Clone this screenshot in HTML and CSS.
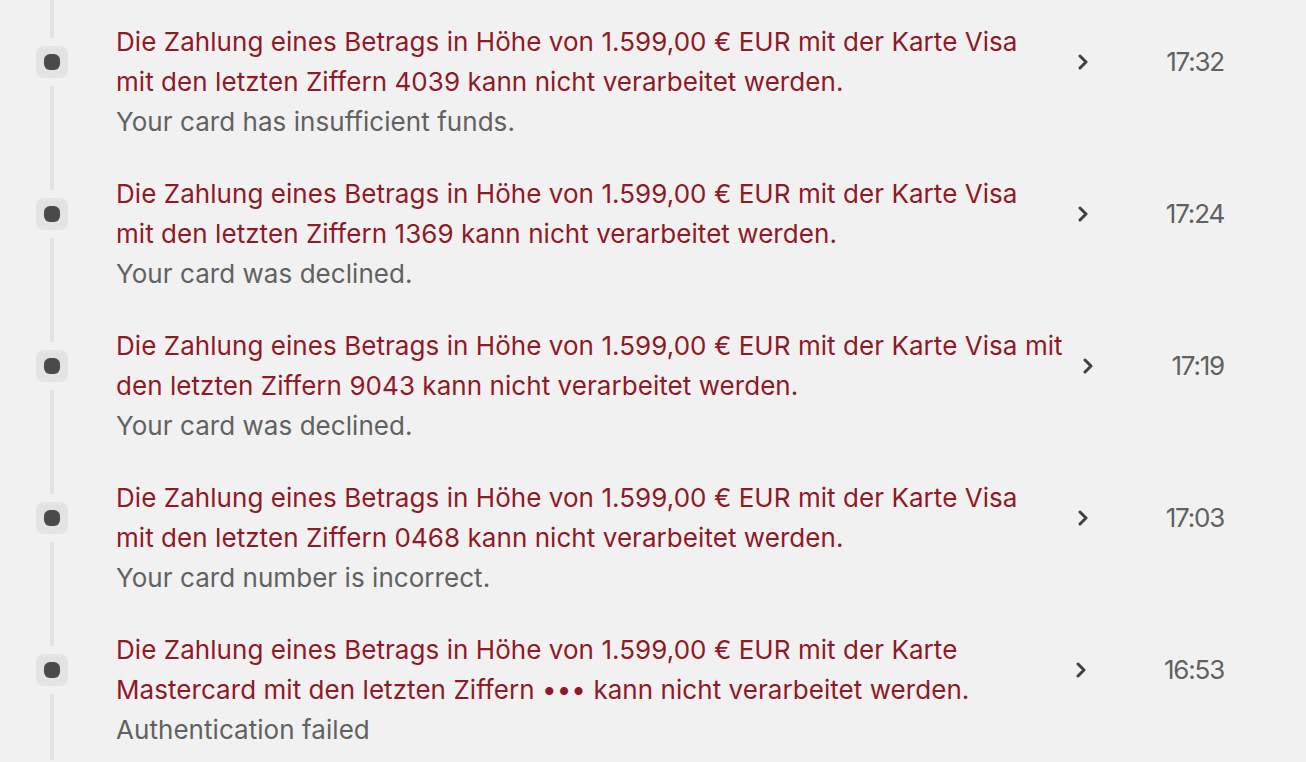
FILE: index.html
```html
<!DOCTYPE html>
<html lang="de">
<head>
<meta charset="utf-8">
<title>Timeline</title>
<link rel="stylesheet" href="styles.css">
</head>
<body>
<ul class="timeline">
  <li class="event">
    <div class="rail"><span class="seg seg-top"></span><span class="marker"><span class="marker-dot"></span></span><span class="seg seg-bottom"></span></div>
    <div class="event-body">
      <p class="title">Die Zahlung eines Betrags in Höhe von 1.599,00 € EUR mit der Karte Visa mit den letzten Ziffern 4039 kann nicht verarbeitet werden.</p>
      <svg class="chevron" viewBox="0 0 10 16" aria-hidden="true"><path d="M2 2l6 6-6 6" fill="none" stroke="currentColor" stroke-width="3" stroke-linecap="round" stroke-linejoin="round"/></svg>
      <span class="time">17:32</span>
      <p class="detail">Your card has insufficient funds.</p>
    </div>
  </li>
  <li class="event">
    <div class="rail"><span class="seg seg-top"></span><span class="marker"><span class="marker-dot"></span></span><span class="seg seg-bottom"></span></div>
    <div class="event-body">
      <p class="title">Die Zahlung eines Betrags in Höhe von 1.599,00 € EUR mit der Karte Visa mit den letzten Ziffern 1369 kann nicht verarbeitet werden.</p>
      <svg class="chevron" viewBox="0 0 10 16" aria-hidden="true"><path d="M2 2l6 6-6 6" fill="none" stroke="currentColor" stroke-width="3" stroke-linecap="round" stroke-linejoin="round"/></svg>
      <span class="time">17:24</span>
      <p class="detail">Your card was declined.</p>
    </div>
  </li>
  <li class="event">
    <div class="rail"><span class="seg seg-top"></span><span class="marker"><span class="marker-dot"></span></span><span class="seg seg-bottom"></span></div>
    <div class="event-body">
      <p class="title">Die Zahlung eines Betrags in Höhe von 1.599,00 € EUR mit der Karte Visa mit den letzten Ziffern 9043 kann nicht verarbeitet werden.</p>
      <svg class="chevron" viewBox="0 0 10 16" aria-hidden="true"><path d="M2 2l6 6-6 6" fill="none" stroke="currentColor" stroke-width="3" stroke-linecap="round" stroke-linejoin="round"/></svg>
      <span class="time">17:19</span>
      <p class="detail">Your card was declined.</p>
    </div>
  </li>
  <li class="event">
    <div class="rail"><span class="seg seg-top"></span><span class="marker"><span class="marker-dot"></span></span><span class="seg seg-bottom"></span></div>
    <div class="event-body">
      <p class="title">Die Zahlung eines Betrags in Höhe von 1.599,00 € EUR mit der Karte Visa mit den letzten Ziffern 0468 kann nicht verarbeitet werden.</p>
      <svg class="chevron" viewBox="0 0 10 16" aria-hidden="true"><path d="M2 2l6 6-6 6" fill="none" stroke="currentColor" stroke-width="3" stroke-linecap="round" stroke-linejoin="round"/></svg>
      <span class="time">17:03</span>
      <p class="detail">Your card number is incorrect.</p>
    </div>
  </li>
  <li class="event">
    <div class="rail"><span class="seg seg-top"></span><span class="marker"><span class="marker-dot"></span></span><span class="seg seg-bottom"></span></div>
    <div class="event-body">
      <p class="title">Die Zahlung eines Betrags in Höhe von 1.599,00 € EUR mit der Karte Mastercard mit den letzten Ziffern ••• kann nicht verarbeitet werden.</p>
      <svg class="chevron" viewBox="0 0 10 16" aria-hidden="true"><path d="M2 2l6 6-6 6" fill="none" stroke="currentColor" stroke-width="3" stroke-linecap="round" stroke-linejoin="round"/></svg>
      <span class="time">16:53</span>
      <p class="detail">Authentication failed</p>
    </div>
  </li>
</ul>
</body>
</html>
```

FILE: styles.css
```css
html, body {
  margin: 0;
  padding: 0;
  background: #f1f1f1;
}

body {
  font-family: Inter, "Noto Sans", "Liberation Sans", sans-serif;
  font-size: 26px;
  line-height: 40px;
  color: #616161;
  overflow: hidden;
  height: 762px;
}

.timeline {
  list-style: none;
  margin: 0;
  padding: 0 82px 0 36px;
}

.event {
  display: flex;
  height: 152px;
}

.rail {
  width: 32px;
  flex: none;
  display: flex;
  flex-direction: column;
  align-items: center;
}

.seg {
  width: 4px;
  background: #e3e3e3;
}

.seg-top {
  height: 38px;
  flex: none;
}

.seg-bottom {
  flex: 1;
}

.marker {
  flex: none;
  width: 32px;
  height: 32px;
  margin: 8px 0;
  border-radius: 8px;
  background: #e3e3e3;
  display: flex;
  align-items: center;
  justify-content: center;
}

.marker-dot {
  width: 16px;
  height: 16px;
  border-radius: 6px;
  background: #4a4a4a;
}

.event-body {
  flex: 1;
  min-width: 0;
  padding: 22px 0 10px 48px;
  display: grid;
  grid-template-columns: 1fr auto auto;
  grid-template-rows: auto auto;
  align-content: start;
}

.title {
  grid-column: 1;
  grid-row: 1;
  margin: 0;
  color: #8e1a28;
  letter-spacing: 0.055px;
}

.chevron {
  grid-column: 2;
  grid-row: 1;
  align-self: center;
  width: 10px;
  height: 16px;
  margin-left: 17px;
  color: #404040;
}

.time {
  grid-column: 3;
  grid-row: 1;
  align-self: center;
  margin-left: 78px;
  letter-spacing: -1.2px;
}

.detail {
  grid-column: 1;
  grid-row: 2;
  margin: 0;
  letter-spacing: 0.05px;
}
```
